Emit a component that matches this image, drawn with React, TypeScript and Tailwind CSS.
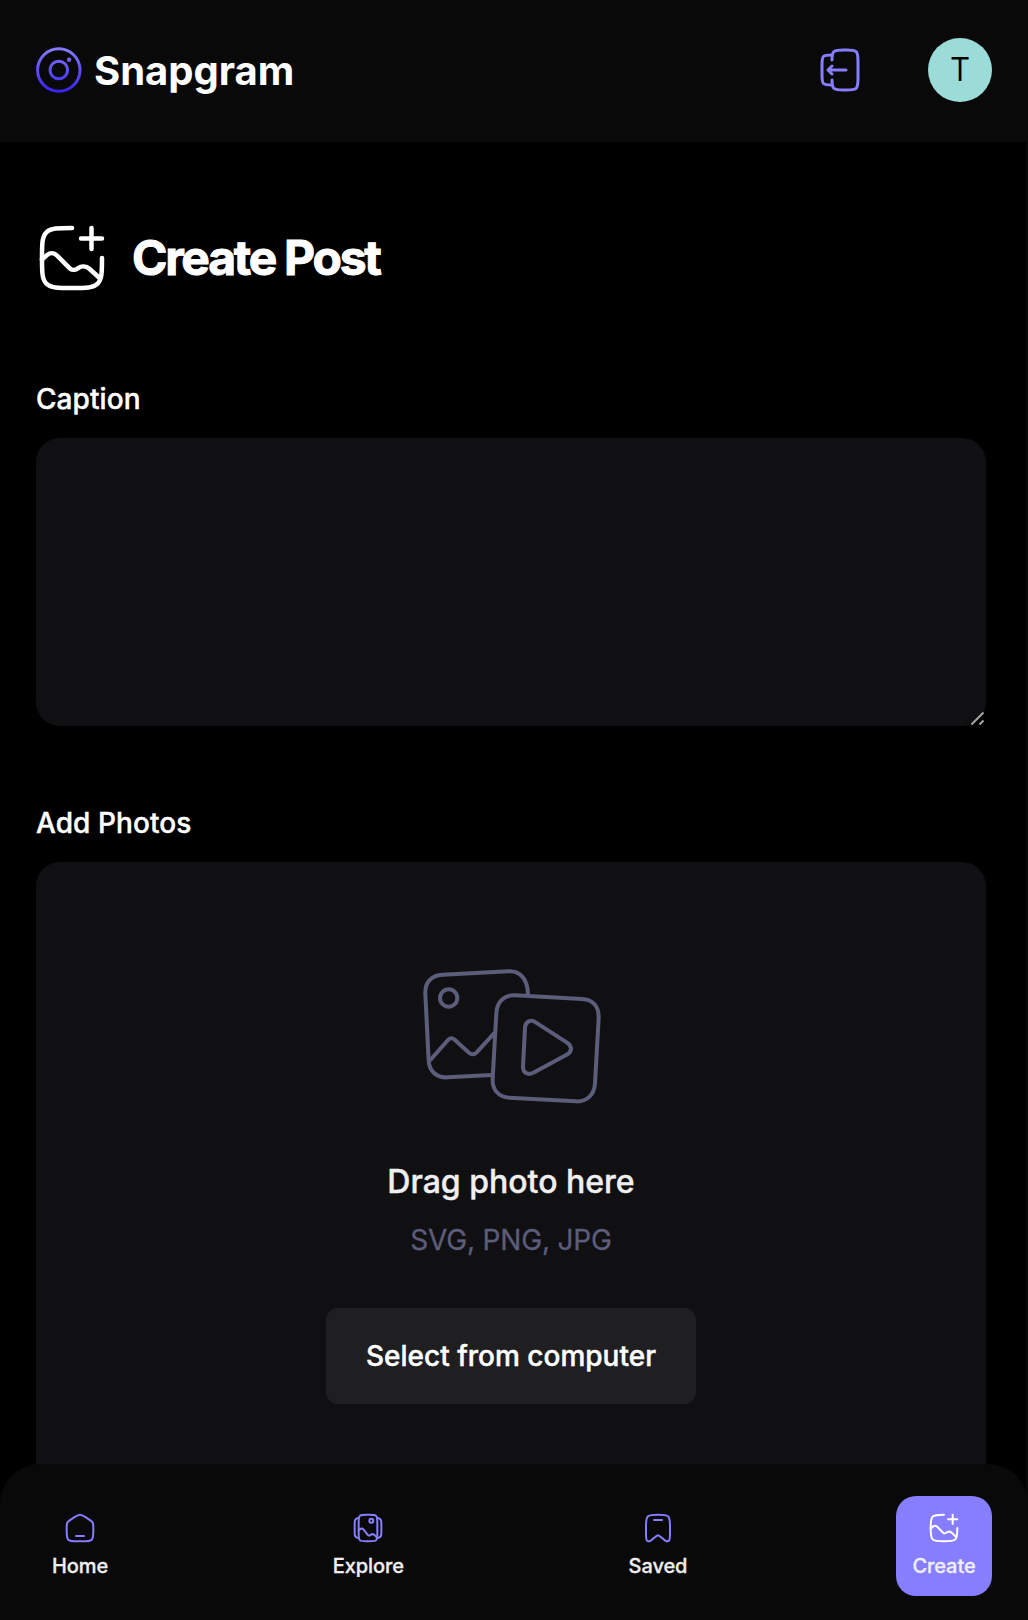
import React from "react";

type IconProps = { className?: string };

function Icon({ className, children }: IconProps & { children: React.ReactNode }) {
  return (
    <svg viewBox="0 0 24 24" fill="none" stroke="currentColor" strokeWidth="1.5" strokeLinecap="round" strokeLinejoin="round" className={className}>
      {children}
    </svg>
  );
}

const GalleryAdd = ({ className }: IconProps) => (
  <Icon className={className}>
    <path d="M22 12C22 16.714 22 19.071 20.535 20.535C19.071 22 16.714 22 12 22C7.286 22 4.929 22 3.464 20.535C2 19.071 2 16.714 2 12C2 7.286 2 4.929 3.464 3.464C4.929 2 7.286 2 12 2" />
    <path d="M2 12.5L3.752 10.968C4.663 10.17 6.036 10.216 6.892 11.072L11.182 15.362C11.869 16.049 12.951 16.143 13.746 15.584L14.045 15.374C15.189 14.57 16.737 14.663 17.777 15.599L21 18.5" />
    <path d="M15 5.5H22M18.5 9V2" />
  </Icon>
);

const Home = ({ className }: IconProps) => (
  <Icon className={className}>
    <path d="M2 12.204C2 9.915 2 8.771 2.519 7.823C3.038 6.874 3.987 6.286 5.884 5.108L7.884 3.867C9.889 2.622 10.892 2 12 2C13.108 2 14.111 2.622 16.116 3.867L18.116 5.108C20.013 6.286 20.962 6.874 21.481 7.823C22 8.771 22 9.915 22 12.204V13.725C22 17.626 22 19.576 20.828 20.788C19.657 22 17.771 22 14 22H10C6.229 22 4.343 22 3.172 20.788C2 19.576 2 17.626 2 13.725V12.204Z" />
    <path d="M15 18H9" />
  </Icon>
);

const Wallpaper = ({ className }: IconProps) => (
  <Icon className={className}>
    <path d="M5 8C5 5.172 5 3.757 5.879 2.879C6.757 2 8.172 2 11 2H13C15.828 2 17.243 2 18.121 2.879C19 3.757 19 5.172 19 8V16C19 18.828 19 20.243 18.121 21.121C17.243 22 15.828 22 13 22H11C8.172 22 6.757 22 5.879 21.121C5 20.243 5 18.828 5 16V8Z" />
    <path d="M19 19.5C21.2 19.4 22 18 22 16V8C22 6 21.2 4.6 19 4.5" />
    <path d="M5 19.5C2.8 19.4 2 18 2 16V8C2 6 2.8 4.6 5 4.5" />
    <path d="M5 13.8L6 12.9C6.9 12.2 8 12.4 8.7 13.2L11.7 17C12.2 17.7 13.1 17.8 13.8 17.3C15 16.4 16.3 16.5 17.2 17.5L19 19.5" />
    <circle cx="14.5" cy="6.5" r="1.5" />
  </Icon>
);

const Bookmark = ({ className }: IconProps) => (
  <Icon className={className}>
    <path d="M21 16.091V11.098C21 6.809 21 4.665 19.682 3.332C18.364 2 16.243 2 12 2C7.757 2 5.636 2 4.318 3.332C3 4.665 3 6.809 3 11.098V16.091C3 19.188 3 20.736 3.734 21.412C4.084 21.735 4.526 21.938 4.997 21.992C5.984 22.105 7.137 21.085 9.442 19.046C10.461 18.145 10.971 17.694 11.56 17.575C11.851 17.517 12.149 17.517 12.44 17.575C13.029 17.694 13.539 18.145 14.558 19.046C16.863 21.085 18.016 22.105 19.003 21.992C19.474 21.938 19.916 21.735 20.266 21.412C21 20.736 21 19.188 21 16.091Z" />
    <path d="M15 6H9" />
  </Icon>
);

const Logout = ({ className }: IconProps) => (
  <Icon className={className}>
    <path d="M8 7C8.014 4.825 8.11 3.647 8.879 2.879C9.757 2 11.172 2 14 2H15C17.828 2 19.243 2 20.121 2.879C21 3.757 21 5.172 21 8V16C21 18.828 21 20.243 20.121 21.121C19.243 22 17.828 22 15 22H14C11.172 22 9.757 22 8.879 21.121C8.11 20.353 8.014 19.175 8 17" />
    <path d="M8 19.5C5.643 19.5 4.464 19.5 3.732 18.768C3 18.036 3 16.857 3 14.5V9.5C3 7.143 3 5.964 3.732 5.232C4.464 4.5 5.643 4.5 8 4.5" />
    <path d="M15 12H6M6 12L8 14M6 12L8 10" />
  </Icon>
);

const Logo = () => (
  <svg viewBox="0 0 46 46" fill="none" className="h-[46px] w-[46px]">
    <defs>
      <linearGradient id="brand" x1="0" y1="0" x2="0" y2="46" gradientUnits="userSpaceOnUse">
        <stop stopColor="#877EFF" />
        <stop offset="1" stopColor="#3620ED" />
      </linearGradient>
    </defs>
    <circle cx="22.8" cy="23" r="21.2" stroke="url(#brand)" strokeWidth="3" />
    <circle cx="22.8" cy="23" r="8.8" stroke="url(#brand)" strokeWidth="3" />
    <circle cx="33.1" cy="12.8" r="2.2" fill="url(#brand)" />
  </svg>
);

const MediaArt = () => (
  <svg viewBox="60 80 558 420" fill="none" stroke="#5C5C7B" strokeWidth="12" strokeLinecap="round" strokeLinejoin="round" className="ml-[3px] h-[140px] w-[186px]">
    <path strokeLinecap="butt" d="M384 161C383 117 360 91 326 93L128 103C93 105 74 127 76 161L86 361C88 394 111 413 143 411L276 404" />
    <path strokeLinecap="butt" d="M90 360L144 299Q154 289 164 298L207 337Q219 347 230 336L285 276" />
    <circle cx="146" cy="173" r="26" />
    <path d="M346 165L546 176C580 178 597 200 596 233L585 429C583 463 561 485 527 483L328 472C295 470 276 448 278 415L289 219C291 184 312 163 346 165Z" />
    <path d="M375 262C376 243 393 236 407 246L500 306C518 318 517 334 500 343L400 397C383 406 369 397 369 379Z" />
  </svg>
);

const navItems = [
  { label: "Home", Glyph: Home, active: false },
  { label: "Explore", Glyph: Wallpaper, active: false },
  { label: "Saved", Glyph: Bookmark, active: false },
  { label: "Create", Glyph: GalleryAdd, active: true },
];

export default function App() {
  return (
    <div className="relative flex h-[1620px] w-full flex-col overflow-hidden bg-black font-['Inter',sans-serif] text-white">
      <header className="flex h-[142px] shrink-0 items-start justify-between bg-[#09090A] px-9 pt-[38px]">
        <div className="flex h-16 items-center gap-3">
          <Logo />
          <span className="mt-0.5 text-[40px] leading-[50px] font-bold">Snapgram</span>
        </div>
        <div className="flex items-center gap-16">
          <button aria-label="Log out" className="text-[#877EFF]">
            <Logout className="size-12" />
          </button>
          <div className="flex size-16 items-center justify-center rounded-full bg-[#9BDBD8] pb-[3px] font-['Open_Sans',sans-serif] text-[32px] leading-none text-black">T</div>
        </div>
      </header>

      <main className="flex flex-col pr-[42px] pl-9">
        <div className="mt-20 flex h-[72px] items-center gap-6">
          <GalleryAdd className="size-[72px]" />
          <h1 className="text-[48px] leading-[68px] font-bold tracking-[-0.047em] [-webkit-text-stroke:1px]">Create Post</h1>
        </div>
        <label htmlFor="caption" className="mt-[85px] text-[28px] leading-10 font-medium tracking-[0.003em] [-webkit-text-stroke:0.4px]">Caption</label>
        <div className="relative mt-[19px] h-[288px]">
          <textarea id="caption" className="block h-full w-full resize-none rounded-[24px] bg-[#101012] outline-none" />
          <svg viewBox="0 0 16 16" className="absolute right-0 bottom-0 size-4" stroke="#a5a5a5" strokeWidth="2">
            <path d="M1.5 14.5L13.5 2.5M9.5 14.5L13.5 10.5" />
          </svg>
        </div>
        <p className="mt-[77px] text-[28px] leading-10 font-medium tracking-[0.003em] [-webkit-text-stroke:0.4px]">Add Photos</p>
        <section className="mt-[19px] flex h-[780px] flex-col items-center rounded-[24px] bg-[#101012] pt-[105px]">
          <MediaArt />
          <h3 className="mt-[53px] text-[32px] leading-[44px] font-medium text-[#EFEFEF] [-webkit-text-stroke:0.4px]">Drag photo here</h3>
          <p className="mt-4 text-[28px] leading-10 tracking-[-0.006em] text-[#5C5C7B] [-webkit-text-stroke:0.3px]">SVG, PNG, JPG</p>
          <button className="mt-12 h-24 w-[370px] rounded-xl bg-[#1F1F22] text-[28px] font-medium [-webkit-text-stroke:0.4px]">Select from computer</button>
        </section>
      </main>

      <nav className="absolute inset-x-0 bottom-0 flex h-[156px] items-start justify-between rounded-t-[40px] bg-[#09090A] px-9 pt-8">
        {navItems.map(({ label, Glyph, active }) => (
          <a key={label} className={`flex h-[100px] flex-col items-center rounded-[20px] pt-4 ${active ? "w-24 bg-[#877EFF] text-white" : "px-4 text-[#877EFF]"}`}>
            <Glyph className="size-8" />
            <span className="mt-2 text-[20px] leading-7 font-medium tracking-[-0.004em] text-[#EFEFEF] [-webkit-text-stroke:0.3px]">{label}</span>
          </a>
        ))}
      </nav>
      <div className="absolute inset-y-0 right-0 w-0.5 bg-[#09090A]" />
    </div>
  );
}
